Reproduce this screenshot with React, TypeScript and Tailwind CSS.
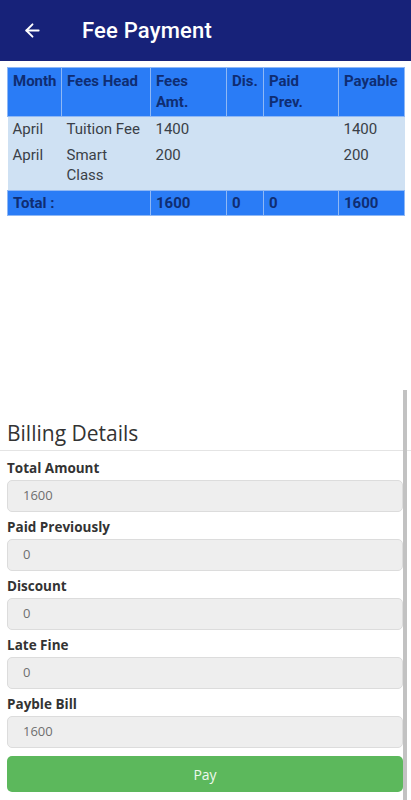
import { ArrowLeft } from "lucide-react";

type Row = { month: string; head: string; amt: string; dis: string; paid: string; payable: string };

const rows: Row[] = [
  { month: "April", head: "Tuition Fee", amt: "1400", dis: "", paid: "", payable: "1400" },
  { month: "April", head: "Smart Class", amt: "200", dis: "", paid: "", payable: "200" },
];

const fields = [
  { label: "Total Amount", value: "1600" },
  { label: "Paid Previously", value: "0" },
  { label: "Discount", value: "0" },
  { label: "Late Fine", value: "0" },
  { label: "Payble Bill", value: "1600" },
];

const th = "border border-[#8fb8f5] px-[5px] py-[3px] text-left align-top font-bold leading-[21px]";
const td = "px-[5px] py-[3px] align-top leading-[20px]";
const tf = "border border-[#8fb8f5] px-[5px] py-[2px] text-left font-bold leading-[20px]";

export default function App() {
  return (
    <div className="relative min-h-[800px] bg-white font-['Roboto',sans-serif]">
      {/* App bar */}
      <div className="flex h-[61px] items-center bg-[#172279] text-white">
        <ArrowLeft className="ml-[22px] h-[21px] w-[21px]" strokeWidth={2.2} />
        <h1 className="ml-[39px] text-[22px] font-medium tracking-[0.2px]">Fee Payment</h1>
      </div>

      {/* Fee table */}
      <div className="px-[7px] pt-[6px]">
        <table className="w-[397px] table-fixed border-collapse text-[15px]">
          <colgroup>
            <col className="w-[54px]" />
            <col className="w-[89px]" />
            <col className="w-[76px]" />
            <col className="w-[37px]" />
            <col className="w-[75px]" />
            <col className="w-[66px]" />
          </colgroup>
          <thead>
            <tr className="h-[48px] bg-[#2a7cf6] text-[#0f2d72]">
              <th className={th + " whitespace-nowrap"}>Month</th>
              <th className={th}>Fees Head</th>
              <th className={th}>Fees Amt.</th>
              <th className={th}>Dis.</th>
              <th className={th}>Paid Prev.</th>
              <th className={th + " whitespace-nowrap"}>Payable</th>
            </tr>
          </thead>
          <tbody className="bg-[#cfe1f3] text-[#3a3f47]">
            {rows.map((r, i) => (
              <tr key={i}>
                <td className={td + (i === 0 ? " pt-[2px]" : " pb-[5px]")}>{r.month}</td>
                <td className={td + (i === 0 ? " pt-[2px] whitespace-nowrap" : " pr-[12px] pb-[5px]")}>{r.head}</td>
                <td className={td + (i === 0 ? " pt-[2px]" : " pb-[5px]")}>{r.amt}</td>
                <td className={td}>{r.dis}</td>
                <td className={td}>{r.paid}</td>
                <td className={td + (i === 0 ? " pt-[2px]" : " pb-[5px]")}>{r.payable}</td>
              </tr>
            ))}
          </tbody>
          <tfoot>
            <tr className="bg-[#2a7cf6] text-[#0f2d72]">
              <td className={tf} colSpan={2}>Total :</td>
              <td className={tf}>1600</td>
              <td className={tf}>0</td>
              <td className={tf}>0</td>
              <td className={tf}>1600</td>
            </tr>
          </tfoot>
        </table>
      </div>

      {/* Billing details */}
      <div className="mt-[203px] font-['Open_Sans',sans-serif]">
        <div className="border-b border-[#e4e4e4] pb-[3px] pr-[8px]">
          <h2 className="pl-[7px] text-[21px] leading-[28px] text-[#333]">Billing Details</h2>
        </div>
        <div className="flex flex-col px-[7px] pr-[8px] pt-[7px]">
          {fields.map((f) => (
            <div key={f.label} className="mb-[5px] flex flex-col">
              <label className="mb-[2px] text-[13.5px] font-bold leading-[20px] text-[#333]">{f.label}</label>
              <div className="flex h-[32px] items-center rounded-[5px] border border-[#dcdcdc] bg-[#eeeeee] pl-[15px] text-[13px] text-[#6f6f6f]">
                {f.value}
              </div>
            </div>
          ))}
          <button className="mt-[3px] h-[36px] rounded-[5px] bg-[#5cb85c] text-[14px] text-[#eef8ee]">Pay</button>
        </div>
      </div>

      {/* scroll thumb */}
      <div className="absolute left-[403px] top-[390px] h-[410px] w-[4px] bg-[#c2c2c2]" />
    </div>
  );
}
